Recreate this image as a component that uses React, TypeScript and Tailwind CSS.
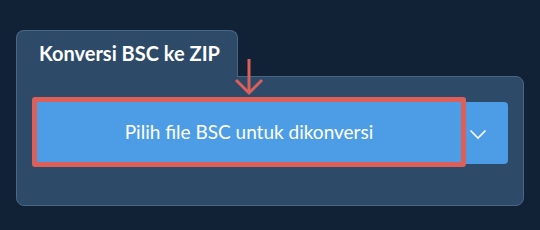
export default function App() {
  return (
    <div
      className="relative h-[230px] w-[540px] bg-[#112236] px-4 pt-[30px]"
      style={{ fontFamily: "Lato, 'Open Sans', sans-serif" }}
    >
      {/* tab */}
      <div className="relative z-10 -mb-px h-[47px] w-[222px] rounded-t-[8px] border border-b-0 border-[#4b6685] bg-[#2d4a69] pl-[22px] pt-[10px]">
        <h2 className="text-[20px] font-bold leading-[25px] text-white">Konversi BSC ke ZIP</h2>
      </div>

      {/* panel */}
      <div className="h-[130px] w-[508px] rounded-b-[8px] rounded-tr-[8px] border border-[#4b6685] bg-[#2d4a69] pl-[15px] pr-[15px] pt-[20px]">
        <div className="flex items-start">
          <div className="flex h-[70px] w-[434px] items-center justify-center rounded-[3px] border-[5px] border-[#dc5f5a] bg-[#4d9de6]">
            <span className="text-[19px] font-normal text-white">Pilih file BSC untuk dikonversi</span>
          </div>
          <button className="mt-[5px] flex h-[62px] w-[42px] items-center rounded-r-[4px] bg-[#4d9de6] pl-[3px] pt-[3px] text-white">
            <svg width="18" height="11" viewBox="0 0 18 11" fill="none" stroke="white" strokeWidth="1.6">
              <path d="M1.5 1.5 L9 9 L16.5 1.5" />
            </svg>
          </button>
        </div>
      </div>

      {/* pointer arrow */}
      <svg
        className="absolute left-[233px] top-[58px] z-20"
        width="32"
        height="38"
        viewBox="0 0 32 38"
        fill="none"
        stroke="#dc5f5a"
        strokeWidth="3"
      >
        <path d="M16 1 V35" />
        <path d="M3 22 L16 35 L29 22" />
      </svg>
    </div>
  );
}
